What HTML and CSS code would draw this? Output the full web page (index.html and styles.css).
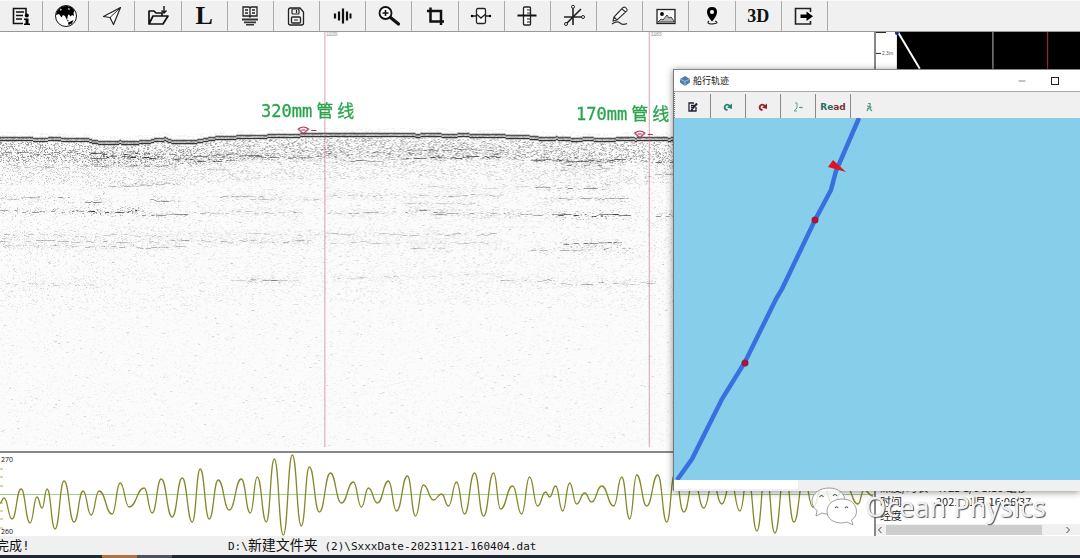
FILE: index.html
```html
<!DOCTYPE html>
<html lang="zh-CN">
<head>
<meta charset="utf-8">
<title>Sub-bottom profiler</title>
<link rel="stylesheet" href="styles.css">
</head>
<body>
<div class="app">
  <nav class="toolbar" aria-label="Main">
    <button class="tool" aria-label="File info"><svg class="icon" viewBox="0 0 24 24"><path d="M17 10V4.500H4.500v15H14" fill="none" stroke="#111" stroke-width="1.600"/><path d="M7 8h8M7 11.500h7M7 15h6" stroke="#111" stroke-width="1.400"/><circle cx="17.800" cy="11.500" r="2"/><path d="M15 14.500h4.500v5H21V21h-6v-1.500h1.500V16H15z"/></svg></button>
    <button class="tool" aria-label="Globe"><svg class="icon" viewBox="0 0 24 24"><circle cx="12" cy="12" r="10.500" fill="#fff" stroke="#111"/><path d="M3 7C6 2 12 .5 18 3.500l2.500 3-1 2.500.5 3-2-1-1.500 1.500L15 10.500l-1 .5-1 5-2-4-2-1-1.500 2.500L5 10l-3 1zM14 18.500l3.500-1.500 2-1-1.500 3.500-3.500 1.500zM13 15.500l2 1.500-1.500.5z"/><path d="m6 4.500 2 1-1.500 1.500zM14 4l2.500 1-2 1z" fill="#eee"/></svg></button>
    <button class="tool" aria-label="Navigate"><svg class="icon" viewBox="0 0 24 24"><path d="M20.500 3.500 3.500 12.500l6.500 1 3.500 7z" fill="#fff" stroke="#222" stroke-width="1.200" stroke-linejoin="round"/><path d="M20.500 3.500 10 13.500" stroke="#222" stroke-width="1"/></svg></button>
    <button class="tool" aria-label="Open"><svg class="icon" viewBox="0 0 24 24"><path d="M3 20V7h5l2 2h6v3M3 20l4-8h15l-5 8z" fill="none" stroke="#111" stroke-width="1.700" stroke-linejoin="round"/><path d="M18 2v7M15.500 6.500 18 9l2.500-2.500" fill="none" stroke="#111" stroke-width="1.400"/></svg></button>
    <button class="tool tool-letter">L</button>
    <button class="tool" aria-label="Records"><svg class="icon" viewBox="0 0 24 24"><path d="M5 3h6l1 1 1-1h6v9h-6l-1 1-1-1H5zM12 4v9M7 6h3M7 9h3M14 6h3M14 9h3" fill="none" stroke="#222" stroke-width="1.300"/><path d="M4 14.500h16v2H4zM6 17.500h12v1.800H6zM8 20h8v1.500H8z" fill="#333"/></svg></button>
    <button class="tool" aria-label="Save"><svg class="icon" viewBox="0 0 24 24"><path d="M4.500 6q0-2 2-2H16l3.500 4v11q0 2-2 2h-11q-2 0-2-2z" fill="none" stroke="#222" stroke-width="1.300"/><rect x="8" y="5" width="7" height="5" rx="1" fill="none" stroke="#222" stroke-width="1.200"/><rect x="7.500" y="13" width="9" height="6" rx="1" fill="none" stroke="#222" stroke-width="1.300"/><path d="M10 16h4M12.500 6v3" stroke="#222" stroke-width="1.200"/></svg></button>
    <button class="tool" aria-label="Signal"><svg class="icon" viewBox="0 0 24 24"><path d="M4 9.500v5M8 7.500v9M12 4.500v15M16 7.500v9" stroke="#111" stroke-width="2.200"/><path d="M19.500 9.500v5" stroke="#111" stroke-width="2"/></svg></button>
    <button class="tool" aria-label="Zoom in"><svg class="icon" viewBox="0 0 24 24"><circle cx="8.500" cy="9" r="6" fill="#fff" stroke="#111" stroke-width="1.800"/><path d="M5.500 9h6M8.500 6v6" stroke="#111" stroke-width="1.600"/><path d="m13.500 13.500 8 6.500" stroke="#111" stroke-width="3.200" stroke-linecap="round"/></svg></button>
    <button class="tool" aria-label="Crop"><svg class="icon" viewBox="0 0 24 24"><path d="M4 7h14v14M7.500 3.500v14H21" fill="none" stroke="#111" stroke-width="2.500"/></svg></button>
    <button class="tool" aria-label="Gate"><svg class="icon" viewBox="0 0 24 24"><path d="M2 12h6M16 12h6" stroke="#222" stroke-width="1.300"/><rect x="7.500" y="4.500" width="9" height="15" rx="1.500" fill="#fff" stroke="#222" stroke-width="1.300"/><path d="m8 10.500 4 3.500 4-3.500" fill="none" stroke="#222" stroke-width="1.400"/><circle cx="3" cy="12" r="1.200"/><circle cx="21" cy="12" r="1.200"/></svg></button>
    <button class="tool" aria-label="Scale"><svg class="icon" viewBox="0 0 24 24"><rect x="8.500" y="3" width="7" height="18" rx="1" fill="#fff" stroke="#222" stroke-width="1.300"/><path d="M12 6h3.500M12 9h3.500M12 15h3.500M12 18h3.500" stroke="#222" stroke-width="1.200"/><path d="M2.500 11.500h19" stroke="#111" stroke-width="2"/></svg></button>
    <button class="tool" aria-label="Axes"><svg class="icon" viewBox="0 0 24 24"><path d="M11 2v19M2 13h18M4 20 19 5" stroke="#222" stroke-width="1.600"/><circle cx="11" cy="2.800" r="1.500" fill="#fff" stroke="#222"/><circle cx="21" cy="13" r="1.500" fill="#fff" stroke="#222"/><circle cx="4" cy="20" r="1.500" fill="#fff" stroke="#222"/></svg></button>
    <button class="tool" aria-label="Draw"><svg class="icon" viewBox="0 0 24 24"><path d="m6 13 9-9.500q2-1 3.500 1T18 7.500L9 16l-4 1zM6 13l3 3M14 5l3.500 3" fill="#fff" stroke="#333" stroke-width="1.100"/><path d="M4 20q5-3.500 8-1t7 .5" fill="none" stroke="#333" stroke-width="1.200"/></svg></button>
    <button class="tool" aria-label="Picture"><svg class="icon" viewBox="0 0 24 24"><rect x="3" y="5.500" width="18" height="14" fill="#f8f8f8" stroke="#222" stroke-width="1.300"/><circle cx="8" cy="10" r="1.900"/><path d="m4 18 3-3 2 1 4-5 2 3 2-1 3 4v1z" fill="#bbb" stroke="#333" stroke-width=".9"/></svg></button>
    <button class="tool" aria-label="Marker"><svg class="icon" viewBox="0 0 24 24"><path d="M12 3q5 0 5 5 0 4-5 9.500Q7 12 7 8q0-5 5-5z"/><circle cx="12" cy="8" r="2" fill="#fff"/><path d="M9 17q-2 1.500 0 2.500t6 0 0-2.500" fill="none" stroke="#222" stroke-width="1.200"/></svg></button>
    <button class="tool tool-3d">3D</button>
    <button class="tool" aria-label="Exit"><svg class="icon" viewBox="0 0 24 24"><path d="M18.500 8V4.500h-15v15.500h15V17" fill="none" stroke="#222" stroke-width="1.600"/><path d="M8.500 10.500h6V7.500l6.500 4.700-6.500 4.800V14h-6z"/></svg></button>
  </nav>

  <main class="workspace">
    <section class="survey">
      <div class="profile">
        <canvas class="profile-canvas" id="profile" width="873" height="419"></canvas>
        <div class="pipe-label pipe-a"><span>320mm</span><span>管</span><span>线</span></div>
        <div class="pipe-label pipe-b"><span>170mm</span><span>管</span><span>线</span></div>
      </div>
      <div class="trace">
        <svg class="trace-plot" viewBox="0 453 873 83" preserveAspectRatio="none">
          <path d="M0 494.500H873" stroke="#9cd08c" fill="none"/>
          <path d="M0 469h3M0 477h3M0 486h3M0 503h3M0 511h3M0 519h3M0 528h3" stroke="#aab45a"/>
          <path id="trace" fill="none"/>
        </svg>
        <span class="trace-max">1270</span>
        <span class="trace-min">1260</span>
      </div>
    </section>
    <aside class="side">
      <svg class="depth" viewBox="0 0 205 458" preserveAspectRatio="xMinYMin slice">
        <rect width="205" height="458" fill="#fff"/>
        <rect x="21" width="184" height="458"/>
        <path d="M0 21.500h5M0 .5h10" stroke="#222"/>
        <text x="6" y="23" class="depth-tick">2.3m</text>
        <path d="M22 0 44 37" stroke="#fff" stroke-width="2"/>
        <circle cx="21" cy="1" r="2" fill="#22307c"/>
        <path d="M117.500 0v50" stroke="#bbb"/>
        <path d="M172.500 0v50" stroke="#b03036"/>
      </svg>
      <div class="readout">
        <div class="readout-row"><span>深度/时长</span><span>4723 1/0 3:10 毫秒</span></div>
        <div class="readout-row"><span>时间</span><span>2021 11月 16:06:37</span></div>
        <div class="readout-row"><span>经度</span></div>
      </div>
      <div class="scroller"><button class="scroll-arrow" aria-label="Scroll left"><svg viewBox="0 0 8 8"><path d="M5.500 1 2.500 4l3 3"/></svg></button><div class="scroll-thumb"></div><button class="scroll-arrow" aria-label="Scroll right"><svg viewBox="0 0 8 8"><path d="m2.500 1 3 3-3 3"/></svg></button></div>
    </aside>
  </main>

  <footer class="status"><span class="status-state">完成!</span><span class="status-file">D:\<span class="han">新建文件夹</span> (2)\SxxxDate-20231121-160404.dat</span></footer>
  <div class="taskbar"><i class="task task-active"></i><i class="task"></i></div>

  <section class="track-window">
    <header class="titlebar">
      <svg class="title-icon" viewBox="0 0 10 10"><path d="m5 0 5 3v3.500L5 10 0 6.500V3z" fill="#4c7fae"/><path d="m0 3 5 2.500L10 3M5 5.500V10" stroke="#a8cbe4" stroke-width=".8" fill="none"/></svg>
      <h1 class="title">船行轨迹</h1>
      <button class="win-btn" aria-label="Minimize"><svg viewBox="0 0 10 10"><path d="M1.500 5h7" stroke="#888"/></svg></button>
      <button class="win-btn" aria-label="Maximize"><svg viewBox="0 0 10 10"><rect x="1.500" y="1.500" width="7" height="7" fill="none" stroke="#222"/></svg></button>
    </header>
    <div class="track-tools">
      <button class="track-tool" aria-label="Edit"><svg viewBox="0 0 10 10"><path d="M8 5v4H1V1h5M3 3.500h3M3 5.500h2M3 7.500h2" fill="none" stroke="#223" stroke-width="1.300"/><path d="m4.500 6.500 4.500-5" stroke="#223" stroke-width="2"/></svg></button>
      <button class="track-tool" aria-label="Redo"><svg viewBox="0 0 10 10"><path d="M4.500 8Q1 7.500 1.800 4.500 3.500 1 7 4" fill="none" stroke="#238576" stroke-width="1.900"/><path d="M9 1.500V7L4 5.500z" fill="#238576"/></svg></button>
      <button class="track-tool" aria-label="Reset"><svg viewBox="0 0 10 10"><path d="M4.500 8Q1 7.500 1.800 4.500 3.500 1 7 4" fill="none" stroke="#981d29" stroke-width="1.900"/><path d="M9 1.500V7L4 5.500z" fill="#981d29"/></svg></button>
      <button class="track-tool" aria-label="Axes"><svg viewBox="0 0 10 10"><path d="M2 1h2v5L1 9h3M6 5.500h4M8 4.500v2" fill="none" stroke="#62a394" stroke-width="1"/></svg></button>
      <button class="track-tool track-read"><span>Re</span><span class="read-alt">ad</span></button>
      <button class="track-tool" aria-label="Ship"><svg viewBox="0 0 10 10"><path d="M4 1.500h2v2L3 9M3 4l4 1-1 2 2 2M5 6 3 7" fill="none" stroke="#4a9c8a" stroke-width="1.200"/></svg></button>
    </div>
    <svg class="map" viewBox="674 118 406 362" preserveAspectRatio="xMinYMin slice">
      <path d="M859 118 836 171 831 190 815 220 782 289 776 299 745 362 722 399 700 443 692 459 677 480" fill="none" stroke="#3a6fe0" stroke-width="4.500"/>
      <path d="m833 160-5 7 18 5z" fill="#e01420"/>
      <circle cx="815" cy="220" r="3.500" fill="#a8143c"/>
      <circle cx="745" cy="363" r="3.500" fill="#a8143c"/>
    </svg>
    <div class="track-foot"><div class="track-progress"></div></div>
  </section>

  <div class="watermark">
    <svg class="wechat" viewBox="0 0 48 42"><g stroke="#888" stroke-width=".8" fill="#fff"><path d="M19 2C9 2 2 8 2 15q0 6 5 9.500L6 30l6-3q4 1.500 8 1 14-1 15-13C35 8 29 2 19 2z" fill-opacity=".8"/><path d="M32 13c-9 0-15 5.500-15 12.500S23 37 32 37l5-1 6 3-1.500-5q5-3 5-9C46 18 41 13 32 13z"/></g><g fill="none" stroke="#555" stroke-width="1.200"><path d="M9.500 11q2-3 4 0M23 10q2-3 4 0M25 22q1.500-2.500 3 0M35 22q1.500-2.500 3 0"/></g></svg>
    <span class="watermark-text">Ocean Physics</span>
  </div>
</div>
<script src="charts.js"></script>
</body>
</html>
```

FILE: styles.css
```css
* { box-sizing: border-box; }
body { margin: 0; font-family: "Liberation Sans", "Noto Sans CJK SC", sans-serif; color: #111; background: #fff; }
button { margin: 0; padding: 0; border: 0; background: none; color: inherit; font: inherit; }
svg, canvas { display: block; }

.app { position: relative; display: flex; flex-direction: column; min-height: 100vh; overflow: hidden; }

.toolbar { display: grid; grid-template-columns: 43px repeat(17, 1fr); height: 32px; padding-right: 252px; background: #f0f0f0; border-bottom: 1px solid #999; border-top: 1px solid #fafafa; }
.tool { display: flex; align-items: center; justify-content: center; border-right: 1px solid #aaa; }
.icon { width: 24px; height: 24px; }
.tool-letter, .tool-3d { font-family: "Liberation Serif", serif; font-weight: bold; }
.tool-letter { font-size: 26px; line-height: 28px; }
.tool-3d { font-size: 18px; line-height: 24px; }

.workspace { flex: 1; display: grid; grid-template-columns: 1fr 206px; min-height: 0; }
.survey { display: flex; flex-direction: column; min-width: 0; }
.profile { position: relative; flex: 1; min-height: 0; }
.profile-canvas { position: absolute; inset: 0; width: 100%; height: 100%; }
.pipe-label { position: absolute; display: flex; gap: 4px; align-items: center; color: #28a44c; font: 17px/20px "DejaVu Sans Mono", "Noto Sans CJK SC", monospace; -webkit-text-stroke: .3px #28a44c; }
.pipe-a { left: 261px; top: 69px; }
.pipe-b { left: 576px; top: 72px; }
.trace { position: relative; height: 85px; border-top: 2px solid #888; background: #fff; font: 7px/8px "Open Sans", sans-serif; }
.trace-plot { width: 100%; height: 100%; }
#trace { stroke: #86862a; stroke-width: 1.3; }
.trace-max, .trace-min { position: absolute; left: -3px; }
.trace-max { top: 3px; }
.trace-min { bottom: 0; }

.side { display: flex; flex-direction: column; min-width: 0; border-left: 2px solid #888; }
.depth { width: 100%; flex: 1 1 0px; min-height: 0; }
.depth-tick { font: 5px "Liberation Sans", sans-serif; fill: #555; }
.readout { background: #fff; padding: 0 0 2px 4px; font: 11px/14px "Noto Sans CJK SC", sans-serif; color: #222; }
.readout-row { display: grid; grid-template-columns: 56px 1fr; white-space: nowrap; }
.scroller { display: flex; align-items: center; justify-content: space-between; height: 11px; margin-bottom: 1px; padding: 0 6px 0 0; background: #f0f0f0; }
.scroll-arrow { width: 10px; height: 10px; }
.scroll-arrow svg { width: 8px; height: 8px; fill: none; stroke: #444; }
.scroll-thumb { height: 10px; width: 156px; margin-right: auto; background: #cdcdcd; }

.status { display: flex; height: 19px; background: #f0f0f0; white-space: pre; font: 11px/19px "DejaVu Sans Mono", "Noto Sans CJK SC", monospace; overflow: hidden; }
.status-state { width: 228px; font-size: 13px; text-indent: -4px; }
.han { font-size: 14px; }
.taskbar { display: flex; height: 3px; padding-left: 102px; background: #202a35; }
.task { width: 35px; background: #4c525a; }
.task-active { background: #b07040; }

.track-window { position: absolute; left: 673px; right: 0; top: 69px; height: 422px; display: flex; flex-direction: column; background: #f0f0f0; border-left: 1px solid #777; border-top: 1px solid #888; box-shadow: 0 1px 7px rgba(0, 0, 0, .45); }
.titlebar { display: flex; align-items: center; height: 21px; padding: 0 20px 0 6px; background: #fff; }
.title-icon { width: 10px; height: 10px; }
.title { flex: 1; margin: 0 0 0 3px; font: 9px/20px "Noto Sans CJK SC", sans-serif; }
.win-btn { width: 10px; height: 10px; margin-left: 23px; }
.track-tools { display: flex; height: 27px; padding-left: 1px; border-top: 1px solid #aaa; border-left: 1px dotted #777; background: #f0f0f0; }
.track-tool { display: flex; align-items: center; justify-content: center; width: 35px; margin-top: 2px; padding-top: 2px; border-right: 1px solid #888; }
.track-tool:last-child { border: 0; }
.track-tool svg { width: 10px; height: 10px; }
.track-read { font: bold 9px/12px "DejaVu Sans", sans-serif; color: #2a6860; }
.read-alt { color: #803038; }
.map { flex: 1; width: 100%; min-height: 0; background: #87ceea; }
.track-foot { height: 11px; background: #f0f0f0; }
.track-progress { width: 124px; height: 9px; background: #fff; }

.watermark { position: absolute; right: 34px; bottom: 30px; display: flex; align-items: center; gap: 7px; }
.wechat { width: 48px; height: 42px; }
.watermark-text { font: 27px/30px "Noto Sans", sans-serif; color: rgba(255, 255, 255, .9); text-shadow: 1px 1px 1px #555, 0 0 1px #aaa; }
```

FILE: charts.js
```js
// Turning points of the received signal, as x, y pairs.
const turns = [0,503,4,498,12,519,21,489,30,523,37,497,42,508,47,489,55,529,64,481,74,522,83,491,91,515,99,491,112,514,120,483,129,507,144,488,152,513,161,479,172,517,182,478,192,522,200,469,209,519,218,480,229,510,241,479,250,513,257,477,266,522,274,459,283,535,292,455,301,526,309,467,319,512,330,473,341,503,353,482,361,507,368,488,377,503,388,481,396,511,407,476,415,516,423,485,433,500,441,494,448,506,456,482,464,514,474,473,483,516,493,473,500,509,512,486,521,514,529,477,537,506,545,492,549,497,555,486,562,511,569,483,576,504,584,493,591,502,601,486,613,506,621,477,629,519,636,475,646,506,657,475,666,522,674,474,683,512,693,480,703,508,712,483,721,504,730,482,739,511,747,475,756,531,765,470,774,533,784,470,793,522,803,478,812,507,822,485,832,505,844,484,857,504,863,490,872,496];
let d = `M${turns[0]} ${turns[1]}`;
for (let i = 2; i < turns.length; i += 2) {
  const mid = (turns[i - 2] + turns[i]) / 2;
  d += `C${mid} ${turns[i - 1]} ${mid} ${turns[i + 1]} ${turns[i]} ${turns[i + 1]}`;
}
document.getElementById("trace").setAttribute("d", d);

// Echo profile: seabed line, sediment speckle and broken reflectors.
const c = document.getElementById("profile").getContext("2d");
const W = 873, H = 419, TOP = 33;
let seed = 7;
const rnd = () => (seed = (seed * 16807) % 2147483647) / 2147483647;
const bed = [[0,139],[85,140],[93,142],[115,143],[150,142],[155,140],[165,139],[172,142],[190,142],[205,140],[222,138],[250,137],[280,136],[324,135],[400,135],[500,136],[530,138],[560,139],[600,140],[640,139],[873,140]];
function bedAt(x) {
  let i = 1;
  while (i < bed.length - 1 && bed[i][0] < x) i++;
  const [x0, y0] = bed[i - 1], [x1, y1] = bed[i];
  return y0 + (y1 - y0) * (x - x0) / (x1 - x0) - TOP;
}
function dot(x, y, a, w = 1) { c.fillStyle = `rgba(25,25,25,${a})`; c.fillRect(x, y, w, 1); }

c.fillStyle = "#fff";
c.fillRect(0, 0, W, H);
c.fillStyle = "#fbfbfb";
c.fillRect(0, 108, W, H - 108);
for (let x = 0; x < W; x++) {
  const b = bedAt(x);
  for (let y = Math.round(b) + 4; y < H - 4; y++) {
    const t = y - b;
    const p = t < 24 ? 0.42 : t < 45 ? 0.27 : t < 170 ? 0.14 : 0.1;
    if (rnd() < p) {
      const peak = t < 24 ? 0.5 : t < 45 ? 0.26 : t < 170 ? 0.14 : 0.09;
      dot(x, y, rnd() * peak);
    }
    if (rnd() < 0.002) dot(x, y, 0.15, 2);
  }
  for (let k = 1; k < 7; k++) if (rnd() < 0.3) dot(x, Math.round(b) - k, 0.06);
  const j = Math.round(b + Math.sin(x / 5) * 0.4);
  dot(x, j - 2, 0.15 + rnd() * 0.15);
  dot(x, j - 1, 0.75);
  dot(x, j, 0.25 + rnd() * 0.3);
  dot(x, j + 1, 0.15 + rnd() * 0.3);
  dot(x, j + 2, 0.88);
  dot(x, j + 3, 0.1 + rnd() * 0.3);
}

// y, start x, end x, strength
const layers = [
  [154,0,88,.5],[155,85,150,.8],[158,90,155,.8],[156,155,270,.5],[161,172,235,.7],[158,235,320,.5],[167,0,175,.25],[166,80,170,.35],
  [171,200,230,.2],[186,105,150,.3],[184,140,175,.4],[199,0,70,.4],[202,80,112,.5],[201,150,176,.5],[198,220,280,.35],[201,250,325,.25],
  [212,0,80,.45],[212,82,140,.9],[216,140,185,.5],[213,200,300,.3],[236,0,170,.25],[235,170,330,.2],[242,0,310,.3],[248,85,185,.3],[247,0,80,.2],
  [280,250,280,.4],[282,230,300,.2],[285,0,100,.2],[150,400,500,.45],[158,405,500,.8],[161,330,402,.5],[161,530,625,.7],[153,324,390,.3],
  [165,560,610,.5],[164,655,680,.7],[170,560,612,.25],[174,655,680,.4],[188,410,530,.2],[189,535,615,.5],[196,324,500,.3],[200,540,625,.4],
  [205,400,480,.25],[213,324,395,.35],[212,405,440,.5],[215,430,560,.45],[216,558,627,.9],[216,655,680,.6],[235,324,500,.25],
  [243,330,500,.2],[244,560,620,.6],[250,530,630,.35],[248,410,450,.3],[278,330,400,.25],[281,500,550,.3],[284,560,650,.35],[276,405,500,.15]
];
for (const [y, x0, x1, s] of layers) {
  let drift = 0;
  for (let x = x0; x < x1;) {
    const len = 2 + Math.floor(rnd() * 5);
    drift = Math.max(-1, Math.min(1, drift + Math.round(rnd() * 2 - 1)));
    if (rnd() < 0.35 + s * 0.5) dot(x, y - TOP + drift, s * (0.4 + rnd() * 0.6), len);
    for (let k = 0; k < 8; k++) dot(x + Math.floor(rnd() * 6), y - TOP + Math.round((rnd() + rnd() - 1) * 6), s * rnd() * 0.5);
    x += len;
  }
}

// Survey event lines and pipe marks
c.fillStyle = "rgba(200,80,120,.55)";
for (const x of [324, 648]) c.fillRect(x, 0, 1, 415);
c.font = "5px Liberation Sans";
c.fillStyle = "#888";
c.fillText("1109", 326, 4);
c.fillText("1183", 650, 4);
c.strokeStyle = "#a82d50";
c.lineWidth = 1.2;
for (const [x, y] of [[303, 98], [639, 102]]) {
  c.beginPath();
  c.moveTo(x - 5, y - 1);
  c.quadraticCurveTo(x, y - 5, x + 5, y - 1);
  c.lineTo(x, y + 4);
  c.closePath();
  c.moveTo(x - 2, y);
  c.lineTo(x + 2, y);
  c.moveTo(x + 8, y + 0.5);
  c.lineTo(x + 13, y + 0.5);
  c.stroke();
}
```
